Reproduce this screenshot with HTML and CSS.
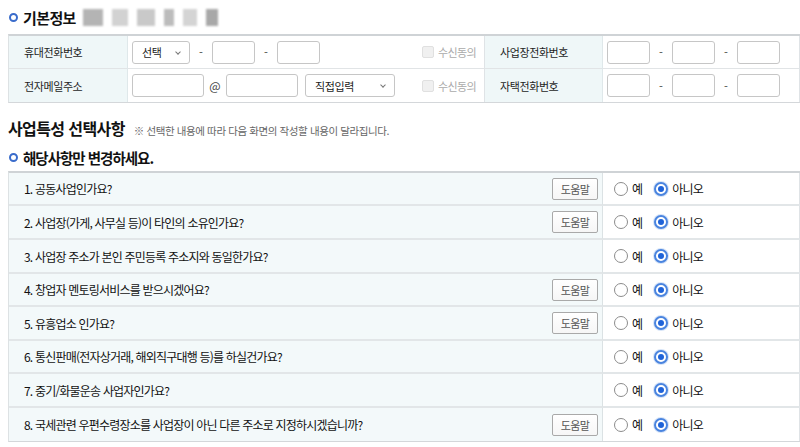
FILE: index.html
```html
<!DOCTYPE html>
<html lang="ko">
<head>
<meta charset="utf-8">
<link rel="stylesheet" href="styles.css">
</head>
<body>
<div class="page">
  <div class="h-row">
    <span class="bullet"></span>
    <h2 class="h-title">기본정보</h2>
    <div class="blur-name">
      <span class="px w1"></span><span class="px w2"></span><span class="px w3"></span><span class="px w4"></span><span class="px w5"></span><span class="px w6"></span>
    </div>
  </div>

  <div class="info-table">
    <div class="cell label">휴대전화번호</div>
    <div class="cell field">
      <div class="select s1">선택<span class="caret"></span></div>
      <span class="dash">-</span>
      <span class="inp short"></span>
      <span class="dash">-</span>
      <span class="inp short"></span>
      <span class="agree"><span class="chk"></span>수신동의</span>
    </div>
    <div class="cell label">사업장전화번호</div>
    <div class="cell field">
      <span class="inp short"></span>
      <span class="dash">-</span>
      <span class="inp short"></span>
      <span class="dash">-</span>
      <span class="inp short"></span>
    </div>

    <div class="cell label last">전자메일주소</div>
    <div class="cell field last">
      <span class="inp mail"></span>
      <span class="at">@</span>
      <span class="inp mail"></span>
      <div class="select s2">직접입력<span class="caret"></span></div>
      <span class="agree"><span class="chk"></span>수신동의</span>
    </div>
    <div class="cell label last">자택전화번호</div>
    <div class="cell field last">
      <span class="inp short"></span>
      <span class="dash">-</span>
      <span class="inp short"></span>
      <span class="dash">-</span>
      <span class="inp short"></span>
    </div>
  </div>

  <div class="sec-row">
    <h2 class="sec-title">사업특성 선택사항</h2>
    <span class="sec-note">※ 선택한 내용에 따라 다음 화면의 작성할 내용이 달라집니다.</span>
  </div>

  <div class="h-row sub">
    <span class="bullet"></span>
    <h3 class="h-title sub-title">해당사항만 변경하세요.</h3>
  </div>

  <div class="q-table">
    <div class="q">1. 공동사업인가요?<button class="help">도움말</button></div>
    <div class="a"><span class="radio"></span><span class="opt">예</span><span class="radio on"></span><span class="opt">아니오</span></div>

    <div class="q">2. 사업장(가게, 사무실 등)이 타인의 소유인가요?<button class="help">도움말</button></div>
    <div class="a"><span class="radio"></span><span class="opt">예</span><span class="radio on"></span><span class="opt">아니오</span></div>

    <div class="q">3. 사업장 주소가 본인 주민등록 주소지와 동일한가요?</div>
    <div class="a"><span class="radio"></span><span class="opt">예</span><span class="radio on"></span><span class="opt">아니오</span></div>

    <div class="q">4. 창업자 멘토링서비스를 받으시겠어요?<button class="help">도움말</button></div>
    <div class="a"><span class="radio"></span><span class="opt">예</span><span class="radio on"></span><span class="opt">아니오</span></div>

    <div class="q">5. 유흥업소 인가요?<button class="help">도움말</button></div>
    <div class="a"><span class="radio"></span><span class="opt">예</span><span class="radio on"></span><span class="opt">아니오</span></div>

    <div class="q">6. 통신판매(전자상거래, 해외직구대행 등)를 하실건가요?</div>
    <div class="a"><span class="radio"></span><span class="opt">예</span><span class="radio on"></span><span class="opt">아니오</span></div>

    <div class="q">7. 중기/화물운송 사업자인가요?</div>
    <div class="a"><span class="radio"></span><span class="opt">예</span><span class="radio on"></span><span class="opt">아니오</span></div>

    <div class="q last">8. 국세관련 우편수령장소를 사업장이 아닌 다른 주소로 지정하시겠습니까?<button class="help">도움말</button></div>
    <div class="a last"><span class="radio"></span><span class="opt">예</span><span class="radio on"></span><span class="opt">아니오</span></div>
  </div>
</div>
</body>
</html>
```

FILE: styles.css
```css
* { box-sizing: border-box; }
html, body { margin: 0; padding: 0; background: #fff; }
body {
  font-family: "Noto Sans CJK KR", "Noto Sans", sans-serif;
  color: #1a1a1a;
  font-size: 11px;
  overflow: hidden;
}
.page { padding-left: 8px; width: 800px; }

.h-row { display: flex; align-items: center; height: 34px; padding-left: 1px; }
.h-row.sub { height: 28px; }
.bullet {
  width: 9px; height: 9px; border-radius: 50%;
  border: 2px solid #3a6ccb; margin: 0 5px 0 0; flex: none;
}
.h-title {
  margin: 0; font-size: 15px; font-weight: 700; letter-spacing: -0.6px; color: #111;
}
.sub-title { font-size: 14.5px; letter-spacing: -1px; }
.blur-name { display: flex; gap: 9px; margin-left: 7px; filter: blur(1.3px); }
.px { height: 17px; background: #c9c9c9; display: block; }
.w1 { width: 20px; background: #b4b4b4; }
.w2 { width: 16px; background: #d2d2d2; }
.w3 { width: 18px; background: #c9c9c9; }
.w4 { width: 10px; background: #bcbcbc; }
.w5 { width: 14px; background: #d4d4d4; }
.w6 { width: 12px; background: #a8a8a8; }

.info-table {
  display: grid;
  grid-template-columns: 119px 357px 118px 197px;
  grid-auto-rows: 33px;
  border-top: 2px solid #cfd3d6;
  border-bottom: 1px solid #d4d7da;
  border-left: 1px solid #dde2e4;
}
.cell { display: flex; align-items: center; border-bottom: 1px solid #e1e4e6; }
.cell.last { border-bottom: none; }
.label {
  background: #eff7f8; padding-left: 15px; letter-spacing: -0.4px; color: #1e1e1e;
  border-right: 1px solid #dfe8ea;
}
.field { padding-left: 4px; border-right: 1px solid #dfe3e6; }

.inp {
  display: inline-block; height: 23px; border: 1px solid #c6c6c6; border-radius: 3px; background: #fff;
}
.inp.short { width: 43px; }
.inp.mail { width: 72px; }
.dash { width: 22px; text-align: center; color: #444; font-size: 11px; }
.at { width: 22px; text-align: center; color: #444; font-size: 12px; }
.select {
  height: 23px; border: 1px solid #c6c6c6; border-radius: 3px; background: #fff;
  display: flex; align-items: center; padding-left: 9px; letter-spacing: -0.4px; color: #222;
  position: relative;
}
.select.s1 { width: 58px; }
.select.s2 { width: 90px; margin-left: 7px; }
.caret {
  position: absolute; right: 9px; top: 8px; width: 4px; height: 4px;
  border-right: 1px solid #777; border-bottom: 1px solid #777; transform: rotate(45deg);
}
.agree {
  margin-left: auto; margin-right: 8px; display: flex; align-items: center;
  color: #aaa; letter-spacing: -0.6px;
}
.chk {
  width: 12px; height: 12px; border: 1px solid #e0e0e0; background: #f0f0f0;
  border-radius: 2px; margin-right: 4px;
}

.sec-row { display: flex; align-items: baseline; margin-top: 13px; height: 27px; }
.sec-title { margin: 0; font-size: 16px; font-weight: 600; letter-spacing: -0.6px; color: #111; }
.sec-note { margin-left: 9px; font-size: 10.5px; color: #666; letter-spacing: -0.4px; }

.q-table {
  display: grid;
  grid-template-columns: 594px 197px;
  grid-template-rows: 33px 34px 34px 33px 34px 33px 34px 33px;
  border-top: 2px solid #cfd3d6;
  border-bottom: 1px solid #d4d7da;
  border-left: 1px solid #dde2e4;
}
.q {
  background: #f3f9fa; display: flex; align-items: center; padding-left: 15px; padding-right: 4px;
  font-size: 12px; letter-spacing: -0.8px; color: #111; border-bottom: 2px solid #e2e6e8;
  border-right: 1px solid #dbe2e4;
}
.a {
  display: flex; align-items: center; padding-left: 11px; border-bottom: 2px solid #e2e6e8;
  border-right: 1px solid #dfe3e6;
}
.q.last, .a.last { border-bottom: none; }
.help {
  margin-left: auto; width: 46px; height: 22px; font: inherit; font-size: 11px;
  letter-spacing: -0.6px; color: #555; background: linear-gradient(#fff, #f6f6f6);
  border: 1px solid #a9a9a9; border-radius: 2px; padding: 0;
}
.radio {
  width: 14px; height: 14px; border-radius: 50%; border: 1px solid #8c8c8c; background: #fff;
  position: relative; flex: none;
}
.radio.on {
  border: 2px solid #4a84df; margin-left: 12px; box-shadow: 0 0 0 1px #d6e4f8;
}
.radio.on::after {
  content: ""; position: absolute; left: 2px; top: 2px; width: 6px; height: 6px;
  border-radius: 50%; background: #1f63d8;
}
.opt { margin-left: 4px; font-size: 12px; letter-spacing: -0.8px; color: #111; }
```
